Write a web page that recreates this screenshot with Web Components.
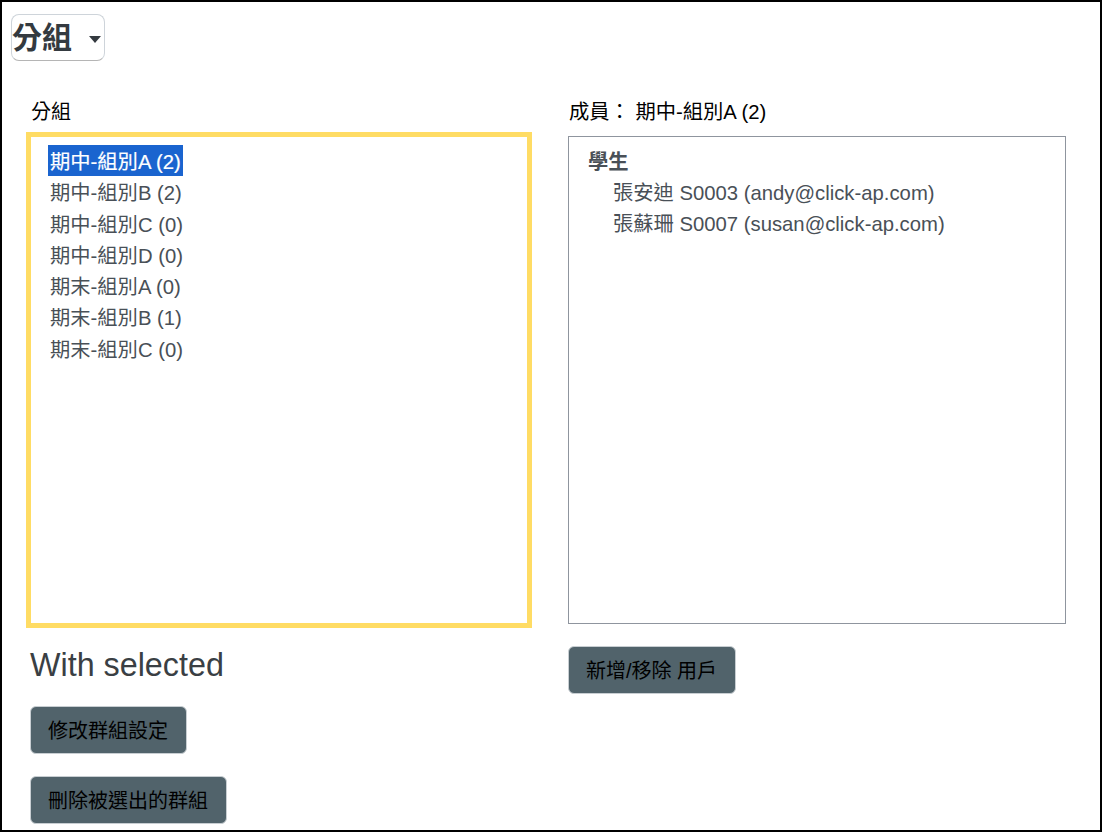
<!DOCTYPE html>
<html lang="zh-Hant"><head><meta charset="utf-8"><title>分組</title>
<style>
html,body{margin:0;padding:0;background:#fff}
body{font-family:"Liberation Sans","Noto Sans CJK TC",sans-serif;color:#343a40}
</style></head><body>
<template id="t-page"><style>
:host{display:block;box-sizing:border-box;width:1102px;height:832px;border:2px solid #000;overflow:hidden;background:#fff;padding:12px 0 0 9px}
.cols{display:grid;grid-template-columns:501px 498px;column-gap:37px;margin:36px 0 0 19px}
</style><slot name="head"></slot><div class="cols"><slot></slot></div></template>

<template id="t-menu"><style>
:host{display:block;box-sizing:border-box;width:94px;height:47px;border:1px solid #ced4da;border-bottom-color:#b5b5b5;border-radius:8px;font-size:30px;font-weight:700;color:#343a40;line-height:45px}
.w{display:flex;align-items:center;gap:17px}
i{display:block;width:0;height:0;border:6px solid transparent;border-top:7px solid #343a40;border-bottom:0;margin-top:4px}
</style><div class="w"><slot></slot><i></i></div></template>

<template id="t-col"><style>
:host{display:flex;flex-direction:column;align-items:flex-start;min-width:0}
.l{font-size:var(--lab-size,20px);color:#000;line-height:30px;height:30px;margin-bottom:var(--lab-gap,5px);padding-left:1px}
</style><div class="l"><slot name="label"></slot></div><slot></slot></template>

<template id="t-list"><style>
:host{display:block;box-sizing:border-box;background:#fff;font-size:20.3px;line-height:34.3px;color:#495057;overflow:hidden}
:host([focus]){width:506px;height:496px;margin-left:-4px;border:5px solid #ffdc64;padding:8px 0 0 17px}
:host(:not([focus])){width:498px;height:488px;border:1px solid #8f959e;padding:7.8px 0 0 20px}
</style><slot></slot></template>

<template id="t-opt"><style>
:host{display:block;width:max-content;height:31.3px;padding:0 2px}
:host([selected]){background:#1a64cf;color:#fff;-webkit-text-stroke:.2px #fff}
:host([group]){font-weight:700;padding-left:0;margin-left:-1px}
:host([indent]){padding-left:24px}
</style><slot></slot></template>

<template id="t-btn"><style>
:host{display:block;width:max-content;box-sizing:border-box;height:48px;padding:0 18px 0 17px;background:#51636b;border:1px solid #c8ced2;border-radius:6px;color:#000;font-size:20px;line-height:48px}
</style><slot></slot></template>

<template id="t-sub"><style>
:host{display:block;font-size:32.3px;line-height:38px;color:#3a3f44;margin:18px 0 22px}
</style><slot></slot></template>

<group-page>
  <menu-title slot="head">分組</menu-title>
  <group-col>
    <span slot="label">分組</span>
    <group-list focus>
      <group-opt selected>期中-組別A (2)</group-opt>
      <group-opt>期中-組別B (2)</group-opt>
      <group-opt>期中-組別C (0)</group-opt>
      <group-opt>期中-組別D (0)</group-opt>
      <group-opt>期末-組別A (0)</group-opt>
      <group-opt>期末-組別B (1)</group-opt>
      <group-opt>期末-組別C (0)</group-opt>
    </group-list>
    <sub-head>With selected</sub-head>
    <act-btn style="margin-bottom:22px">修改群組設定</act-btn>
    <act-btn>刪除被選出的群組</act-btn>
  </group-col>
  <group-col style="--lab-gap:9px;--lab-size:20.3px">
    <span slot="label">成員： 期中-組別A (2)</span>
    <group-list>
      <group-opt group>學生</group-opt>
      <group-opt indent>張安迪 S0003 (andy@click-ap.com)</group-opt>
      <group-opt indent>張蘇珊 S0007 (susan@click-ap.com)</group-opt>
    </group-list>
    <act-btn style="margin-top:22px">新增/移除 用戶</act-btn>
  </group-col>
</group-page>
<script>
[['group-page','t-page'],['menu-title','t-menu'],['group-col','t-col'],['group-list','t-list'],['group-opt','t-opt'],['act-btn','t-btn'],['sub-head','t-sub']].forEach(([n,t])=>{
  customElements.define(n,class extends HTMLElement{constructor(){super();this.attachShadow({mode:'open'}).appendChild(document.getElementById(t).content.cloneNode(true));}});
});
</script>
</body></html>
